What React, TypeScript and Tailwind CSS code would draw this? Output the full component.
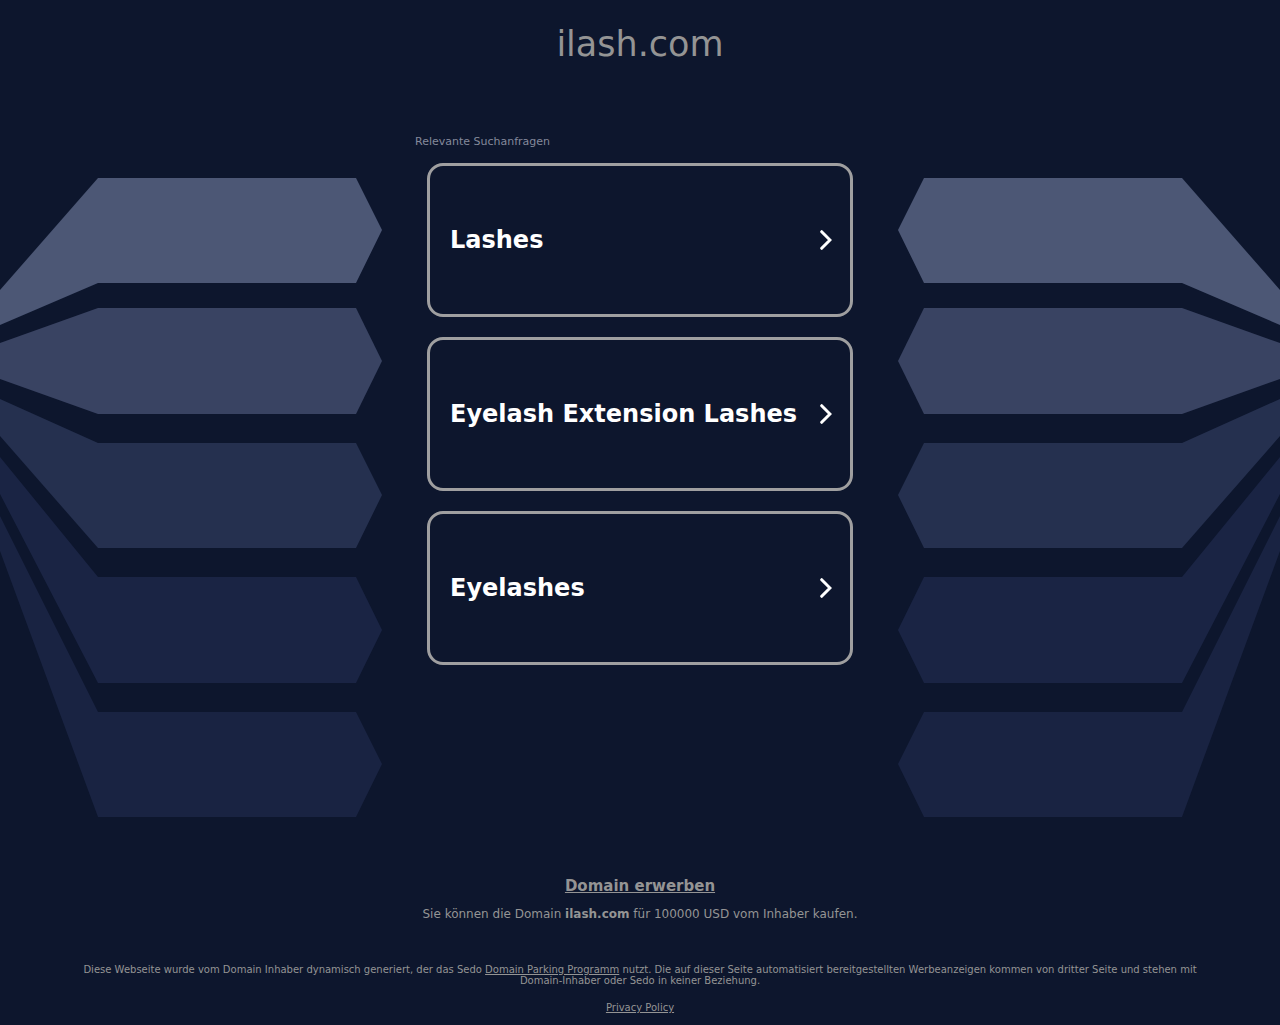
import clsx from "clsx";

const DOMAIN = "ilash.com";

const SEARCHES = ["Lashes", "Eyelash Extension Lashes", "Eyelashes"];

const FEATHERS = [
  { color: "#4c5775", points: "0,112 98,0 356,0 382,52 356,105 98,105 0,147" },
  { color: "#394362", points: "0,165 98,130 356,130 382,183 356,236 98,236 0,201" },
  { color: "#25304f", points: "0,221 98,265 356,265 382,317 356,370 98,370 0,258" },
  { color: "#1a2444", points: "0,279 98,399 356,399 382,452 356,505 98,505 0,316" },
  { color: "#192342", points: "0,338 98,534 356,534 382,586 356,639 98,639 0,373" },
];

function Wing({ flipped = false }: { flipped?: boolean }) {
  return (
    <svg
      viewBox="0 0 382 639"
      aria-hidden="true"
      className={clsx(
        "mt-11 hidden w-[382px] shrink-0 lg:block",
        flipped && "-scale-x-100"
      )}
    >
      {FEATHERS.map((feather) => (
        <polygon
          key={feather.points}
          points={feather.points}
          fill={feather.color}
        />
      ))}
    </svg>
  );
}

function SearchCard({ label }: { label: string }) {
  return (
    <a
      href="#"
      className="flex min-h-[154px] items-center justify-between rounded-2xl border-3 border-[#9f9fa0] pr-[18px] pl-5 text-2xl font-bold text-white"
    >
      {label}
      <svg
        viewBox="0 0 12 20"
        aria-hidden="true"
        className="h-5 w-3 shrink-0"
        fill="none"
        stroke="currentColor"
        strokeWidth="3"
        strokeLinecap="round"
      >
        <path d="M1.7 1.7 10 10 1.7 18.3" />
      </svg>
    </a>
  );
}

function App() {
  return (
    <div
      lang="de"
      className="min-h-screen bg-[#0d162d] font-['DejaVu_Sans',sans-serif] text-[#949494]"
    >
      <header className="pt-6 pb-[70px] text-center">
        <h1 className="text-[35px] leading-10">{DOMAIN}</h1>
      </header>

      <main className="flex items-start justify-center lg:justify-between">
        <Wing />
        <section className="w-full max-w-[450px]">
          <h2 className="mb-[13px] text-[11px] leading-4 text-[#84899b]">
            Relevante Suchanfragen
          </h2>
          <div className="mx-3 flex flex-col gap-5">
            {SEARCHES.map((label) => (
              <SearchCard key={label} label={label} />
            ))}
          </div>
        </section>
        <Wing flipped />
      </main>

      <footer className="px-18 pt-[59px] pb-3 text-center">
        <a
          href="#"
          className="mx-auto block w-fit text-[15px] leading-5 font-bold underline"
        >
          Domain erwerben
        </a>
        <p className="mt-2 text-xs leading-5">
          Sie können die Domain <strong>{DOMAIN}</strong> für 100000 USD vom
          Inhaber kaufen.
        </p>
        <p className="mt-10 text-[10px] leading-[11px]">
          Diese Webseite wurde vom Domain Inhaber dynamisch generiert, der das
          Sedo{" "}
          <a href="#" className="underline">
            Domain Parking Programm
          </a>{" "}
          nutzt. Die auf dieser Seite automatisiert bereitgestellten
          Werbeanzeigen kommen von dritter Seite und stehen mit Domain-Inhaber
          oder Sedo in keiner Beziehung.
        </p>
        <p className="mt-4 text-[10px] leading-[11px]">
          <a href="#" className="underline">
            Privacy Policy
          </a>
        </p>
      </footer>
    </div>
  );
}

export default App;
